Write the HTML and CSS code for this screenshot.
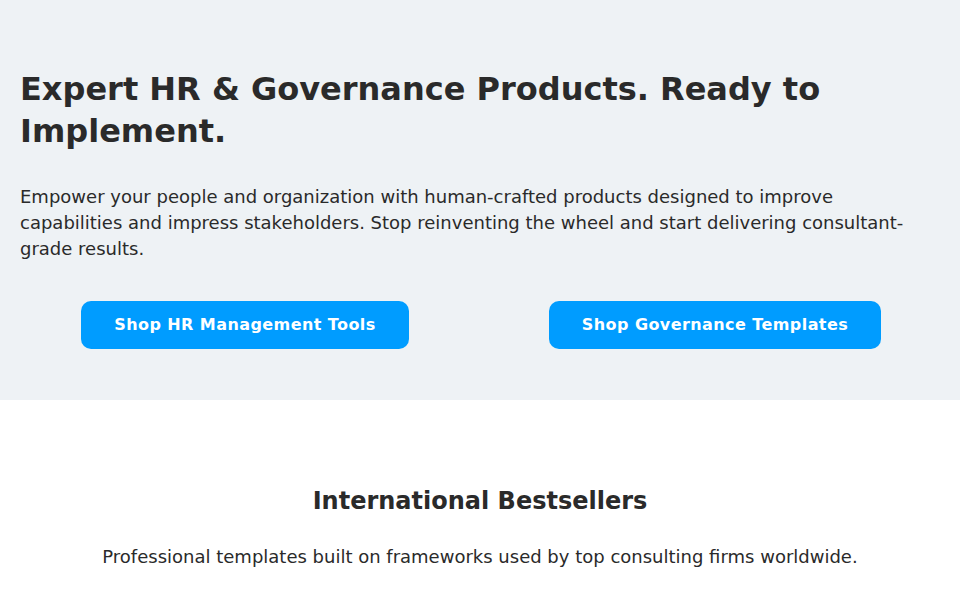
FILE: index.html
```html
<!DOCTYPE html>
<html lang="en">
<head>
<meta charset="utf-8">
<title>Expert HR & Governance Products</title>
<link rel="stylesheet" href="styles.css">
</head>
<body>
<section class="hero">
  <h1 class="hero-title">Expert HR &amp; Governance Products. Ready to Implement.</h1>
  <p class="hero-text">Empower your people and organization with human-crafted products designed to improve capabilities and impress stakeholders. Stop reinventing the wheel and start delivering consultant-grade results.</p>
  <div class="hero-actions">
    <a class="btn" href="#">Shop HR Management Tools</a>
    <a class="btn" href="#">Shop Governance Templates</a>
  </div>
</section>
<section class="bestsellers">
  <h2 class="section-title">International Bestsellers</h2>
  <p class="section-text">Professional templates built on frameworks used by top consulting firms worldwide.</p>
</section>
</body>
</html>
```

FILE: styles.css
```css
* { box-sizing: border-box; }
html, body { margin: 0; padding: 0; }
body {
  font-family: "DejaVu Sans", sans-serif;
  color: #2a2a2a;
  background: #ffffff;
}
.hero {
  background: #eef2f5;
  padding: 68px 20px 0;
  height: 400px;
}
.hero-title {
  margin: 0;
  font-size: 32px;
  line-height: 42px;
  font-weight: bold;
}
.hero-text {
  margin: 32px 0 0;
  font-size: 18px;
  line-height: 26px;
}
.hero-actions {
  margin-top: 39px;
  display: grid;
  grid-template-columns: 1fr 1fr;
  column-gap: 20px;
  justify-items: center;
}
.btn {
  display: inline-block;
  background: #009cff;
  color: #ffffff;
  text-decoration: none;
  font-weight: bold;
  font-size: 16px;
  line-height: 20px;
  padding: 14px 33px;
  border-radius: 10px;
  letter-spacing: 0.42px;
}
.bestsellers {
  text-align: center;
  padding: 85px 20px 0;
}
.section-title {
  margin: 0;
  font-size: 24px;
  line-height: 32px;
  font-weight: bold;
}
.section-text {
  margin: 26px 0 0;
  font-size: 18px;
  line-height: 27px;
}
```
